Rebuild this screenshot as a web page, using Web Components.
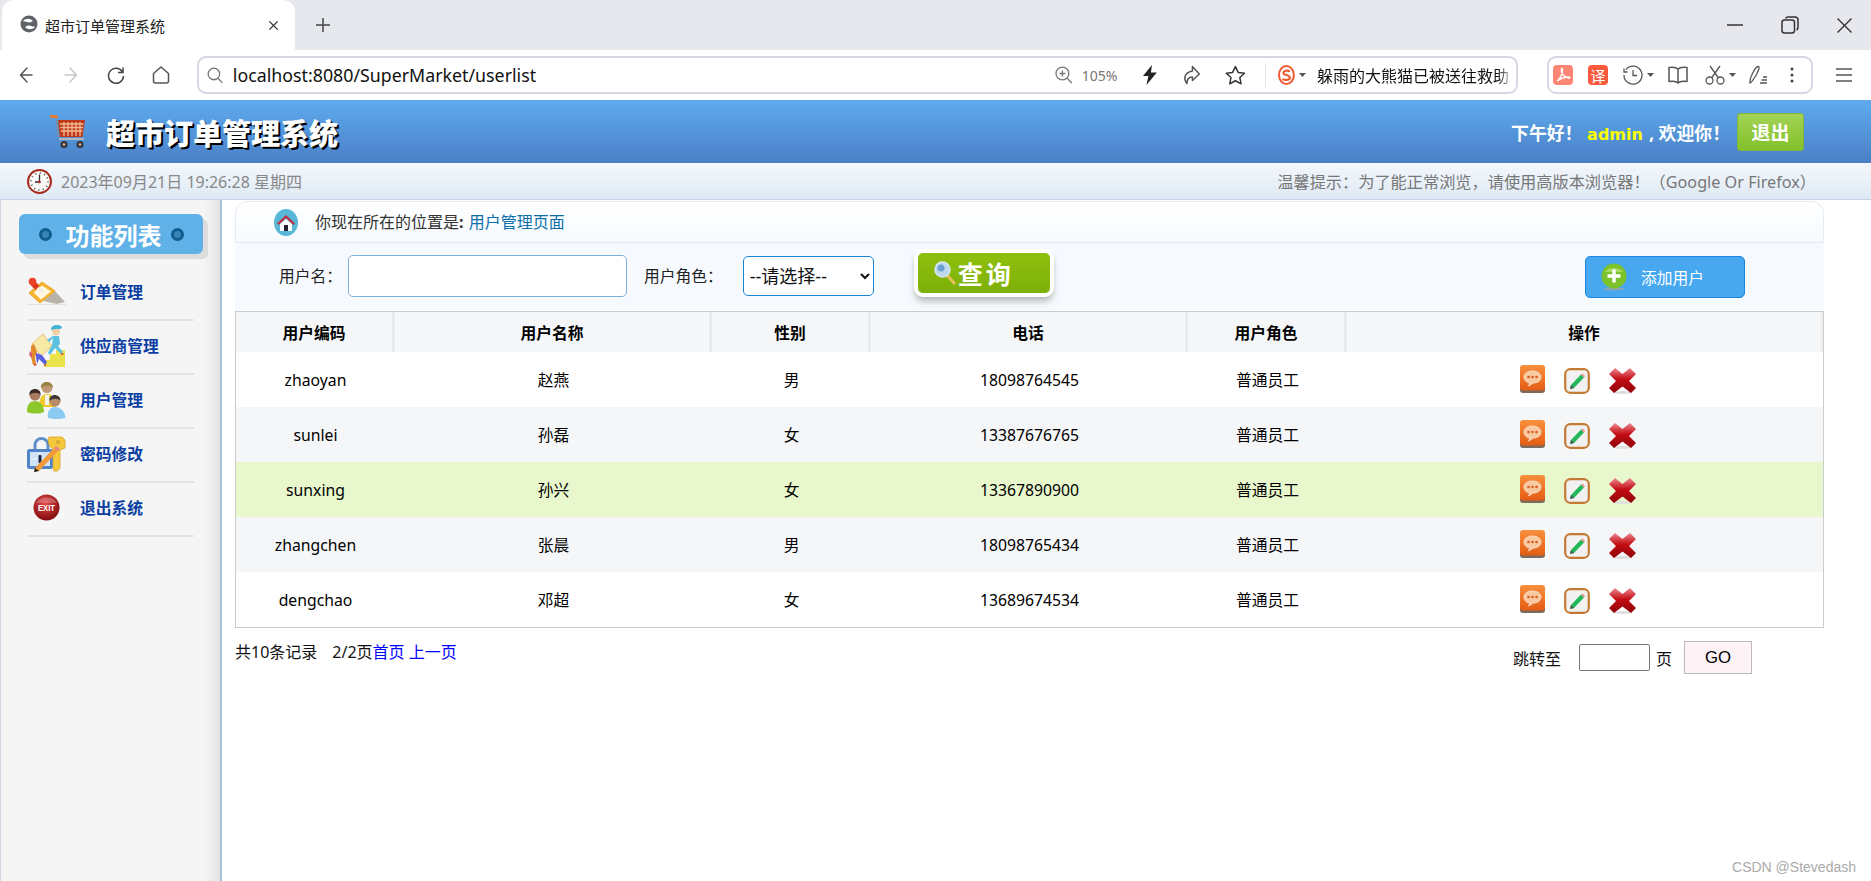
<!DOCTYPE html>
<html lang="zh-CN">
<head>
<meta charset="utf-8">
<title>超市订单管理系统</title>
<style>
  html, body { margin: 0; height: 100%; background: white; overflow: hidden; }
  body { font-family: "Noto Sans", "Noto Sans CJK SC", sans-serif; color: #000; }
</style>
</head>
<body>
<browser-chrome></browser-chrome>
<app-header></app-header>
<time-bar></time-bar>
<app-body>
  <side-menu slot="side"></side-menu>
  <location-bar></location-bar>
  <search-bar></search-bar>
  <user-table>
    <user-row code="zhaoyan" name="赵燕" sex="男" phone="18098764545" role="普通员工"></user-row>
    <user-row code="sunlei" name="孙磊" sex="女" phone="13387676765" role="普通员工" even></user-row>
    <user-row code="sunxing" name="孙兴" sex="女" phone="13367890900" role="普通员工" active></user-row>
    <user-row code="zhangchen" name="张晨" sex="男" phone="18098765434" role="普通员工" even></user-row>
    <user-row code="dengchao" name="邓超" sex="女" phone="13689674534" role="普通员工"></user-row>
  </user-table>
  <page-bar></page-bar>
</app-body>
<water-mark>CSDN @Stevedash</water-mark>

<script>
(function () {
  const line = 'fill="none" stroke="#555" stroke-width="1.5" stroke-linecap="round" stroke-linejoin="round"'
  const caret = `<svg class="c" width="7" height="4" viewBox="0 0 7 4"><path d="M0 0h7L3.5 4z" fill="#555"/></svg>`
  const icons = {
    globe: `<svg width="18" height="18" viewBox="0 0 18 18"><circle cx="9" cy="9" r="8.5" fill="#5f6368"/><path d="M3 6c3-3 7-3 10 0-2 1-3 2-6 1S4 7 3 6zM15 12c-3 3-7 3-10 0 2-1 3-2 6-1s3 0 4 1z" fill="#fff"/></svg>`,
    close: `<svg width="11" height="11" viewBox="0 0 12 12"><path d="M1.5 1.5l9 9M10.5 1.5l-9 9" stroke="#333" stroke-width="1.5"/></svg>`,
    plus: `<svg width="14" height="14" viewBox="0 0 14 14"><path d="M7 0v14M0 7h14" stroke="#444" stroke-width="1.5"/></svg>`,
    back: `<svg width="14" height="16" viewBox="0 0 14 16"><path d="M8 1L1.5 8 8 15M1.5 8H13" ${line}/></svg>`,
    forward: `<svg width="14" height="16" viewBox="0 0 14 16"><path d="M6 1l6.5 7L6 15M12.5 8H1" fill="none" stroke="#c4c6cc" stroke-width="1.5" stroke-linecap="round" stroke-linejoin="round"/></svg>`,
    reload: `<svg width="18" height="18" viewBox="0 0 18 18"><path d="M15.5 6A7.5 7.5 0 1 0 16.5 10M16 1.5V6.5H11" fill="none" stroke="#444" stroke-width="1.5"/></svg>`,
    home: `<svg width="18" height="18" viewBox="0 0 18 18"><path d="M9 1L1.5 7.5V15a2 2 0 0 0 2 2h11a2 2 0 0 0 2-2V7.5z" ${line}/></svg>`,
    search: `<svg width="17" height="17" viewBox="0 0 17 17"><circle cx="7" cy="7" r="5.8" fill="none" stroke="#777" stroke-width="1.3"/><path d="M11.5 11.5l4 4.5" stroke="#777" stroke-width="1.3"/></svg>`,
    zoom: `<svg width="18" height="18" viewBox="0 0 18 18"><circle cx="7.5" cy="7.5" r="6.5" fill="none" stroke="#777" stroke-width="1.3"/><path d="M12.3 12.3l4.7 4.7M7.5 4.5v6M4.5 7.5h6" stroke="#777" stroke-width="1.3"/></svg>`,
    bolt: `<svg width="16" height="20" viewBox="0 0 16 20"><path d="M10 0L1 11h5.5L4.5 20 15 7.5H9z" fill="#222"/></svg>`,
    share: `<svg width="19" height="20" viewBox="0 0 19 20"><path d="M10.5 1.5L17.5 9l-7 6.5V12C7 12 5 14 5 18.5 2 15 1 8 10.5 6z" ${line}/></svg>`,
    star: `<svg width="21" height="20" viewBox="0 0 21 20"><path d="M10.5 1.5l2.8 5.9 6.4.8-4.7 4.4 1.2 6.3-5.7-3.100-5.700 3.100 1.200-6.300L1.300 8.200l6.400-.8z" fill="none" stroke="#333" stroke-width="1.5" stroke-linejoin="round"/></svg>`,
    sogou: `<svg width="17" height="20" viewBox="0 0 17 20"><ellipse cx="8.5" cy="10" rx="7.5" ry="9" fill="#fff" stroke="#ee5a34" stroke-width="2"/><path d="M12 6.5C10 5 5.5 5.5 5.5 8s6.5 1.500 6.500 4.500-5 3-7.500 1.500" fill="none" stroke="#ee5a34" stroke-width="2.2"/></svg>`,
    pdf: `<svg width="20" height="20" viewBox="0 0 20 20"><rect width="20" height="20" rx="4" fill="#ff8674"/><path d="M4 16c3-2 5.5-7 5.5-11 0-2.500-1.200-2.500-1.200 0 0 4 4 8 7.700 8 1 0 1-1-.5-1-3.500 0-8 1.500-11.500 4z" fill="none" stroke="#fff" stroke-width="1.5"/></svg>`,
    history: `<svg width="20" height="20" viewBox="0 0 20 20"><path d="M3 4.5A9 9 0 1 1 1 10M1 3.5V7h3.5M10 5v5.5H14" fill="none" stroke="#555" stroke-width="1.3"/></svg>`,
    book: `<svg width="20" height="18" viewBox="0 0 20 18"><path d="M10 3C8 1 4 1 1 1.5v14c3-.5 7-.5 9 1.500 2-2 6-2 9-1.500v-14C16 1 12 1 10 3zM10 3v14" ${line}/></svg>`,
    scissors: `<svg width="20" height="20" viewBox="0 0 20 20"><circle cx="4.5" cy="15.5" r="3.5" fill="none" stroke="#555" stroke-width="1.3"/><circle cx="15.5" cy="15.5" r="3.5" fill="none" stroke="#555" stroke-width="1.3"/><path d="M6.5 13L15 1M13.5 13L5 1" stroke="#555" stroke-width="1.3"/></svg>`,
    pen: `<svg width="20" height="20" viewBox="0 0 20 20"><path d="M2 18C1 14 7 2 10 1.5c2 0 1 3-1 7-2 3.5-5 9-7 9.5zM12 18h7M13.5 15H19M15 12h4" fill="none" stroke="#555" stroke-width="1.3"/></svg>`,
    dots: `<svg width="4" height="16" viewBox="0 0 4 16"><circle cx="2" cy="2" r="1.5" fill="#444"/><circle cx="2" cy="8" r="1.5" fill="#444"/><circle cx="2" cy="14" r="1.5" fill="#444"/></svg>`,
    menu: `<svg width="16" height="14" viewBox="0 0 16 14"><path d="M0 1h16M0 7h16M0 13h16" stroke="#555" stroke-width="1.3"/></svg>`,
    min: `<svg width="16" height="2" viewBox="0 0 16 2"><path d="M0 1h16" stroke="#333" stroke-width="1.5"/></svg>`,
    restore: `<svg width="18" height="18" viewBox="0 0 18 18"><rect x="1" y="4" width="12.5" height="13" rx="2.5" fill="none" stroke="#333" stroke-width="1.5"/><path d="M4.5 2.5C5 1.500 5.500 1 7 1h7c2 0 3 1 3 3v7.500c0 1.500-.5 2-1.500 2.500" fill="none" stroke="#333" stroke-width="1.5"/></svg>`,
    winclose: `<svg width="15" height="15" viewBox="0 0 15 15"><path d="M.5.5l14 14M14.5.5l-14 14" stroke="#333" stroke-width="1.4"/></svg>`,
    cart: `<svg width="36" height="34" viewBox="0 0 36 34"><path d="M1 2h5l2.5 20" fill="none" stroke="#7f8a96" stroke-width="1.5"/><path d="M.5 1.5h6" stroke="#e07a3a" stroke-width="3" stroke-linecap="round"/><path d="M8 5h27l-2.5 17H10z" fill="#c0391b"/><path d="M10 9h23.5M10.5 12.5h22.5M11 16h21.5M14 7v14M18 7v14M22 7v14M26 7v14M30 7v14" stroke="#f3b892" stroke-width="1.3"/><path d="M9 24h25" stroke="#aeb6be" stroke-width="2"/><circle cx="14" cy="29.5" r="3.5" fill="#3d3532"/><circle cx="14" cy="29.5" r="1.2" fill="#c9c4be"/><circle cx="30" cy="29.5" r="3.5" fill="#3d3532"/><circle cx="30" cy="29.5" r="1.2" fill="#c9c4be"/></svg>`,
    clock: `<svg width="25" height="25" viewBox="0 0 25 25"><circle cx="12.5" cy="12.5" r="11.5" fill="#fbfaf8" stroke="#a62a1c" stroke-width="2"/><circle cx="12.5" cy="12.5" r="8.5" fill="none" stroke="#555" stroke-width="2" stroke-dasharray="1 3.45"/><path d="M12.5 5.5v7.5H8" fill="none" stroke="#333" stroke-width="1.3"/><circle cx="12.5" cy="13" r="1.3" fill="#b22"/></svg>`,
    order: `<svg width="39" height="30" viewBox="0 0 39 30"><path d="M0 27.5h39" stroke="#e0e0e0"/><path d="M16 24l12-10 10 11-8 2z" fill="#b9b3aa"/><path d="M2 16L15 5l13 9-15 12z" fill="#f5b62e" stroke="#eda41e"/><path d="M6.5 15.5L15 8.5l9 6-10 8z" fill="#fff8e0"/><path d="M6 10l3-3 8 7-1.5 2.5z" fill="#f4f0e8"/><path d="M3.5 8l4-4.5 5 5.5-4 4z" fill="#dd3a1e"/><circle cx="5.5" cy="4.5" r="3.8" fill="#e8432a"/></svg>`,
    supplier: `<svg width="39" height="42" viewBox="0 0 39 42"><path d="M17 42v-7h6v-6h6v-4h9v17z" fill="#e9e24a"/><path d="M5 19L16 9l9 12-11 10z" fill="#f6eaa6" stroke="#eec079"/><path d="M4 21l3-2 3 8-2 5 1 8H6l-2-8-2-2 2-4z" fill="#e08a2c"/><path d="M2 26l3 3-1 4z" fill="#d640a8"/><path d="M9 28l6 2 5 7-2 3-6-6-2 5-1-7z" fill="#5a5ee0"/><path d="M8 38l-1 3 3-1zM19 39l-3 1 3 1z" fill="#c9402c"/><circle cx="29" cy="6.5" r="4" fill="#f5cfa5"/><path d="M24 5c0-4 3-5 6-5s5 1 5 3l-2 1h-5z" fill="#3fb6d8"/><path d="M26 11h6l1 8-2 2 5 6-2 2-6-6-5 7-2-2 4-8 1-7-4 4-2-2z" fill="#5cc2e2"/><path d="M34 28l4 1-4 1z" fill="#c9402c"/></svg>`,
    users: `<svg width="39" height="38" viewBox="0 0 39 38"><path d="M12 26c0-9 3-13 8-13s9 4 9 13z" fill="#f0c92e"/><path d="M18 14h4v10h-4z" fill="#f4f4f0"/><circle cx="20" cy="6.5" r="5.5" fill="#c09a78"/><path d="M14 7c-1-8 12-8 12 0-2-3-9-3-12 0z" fill="#9a8444"/><path d="M0 31c-.5-7 3-11 8-11s9 4 9 11c-5 2-12 2-17 0z" fill="#8cc82c"/><circle cx="8" cy="14" r="5.5" fill="#a87a5e"/><path d="M2.5 14c-1-8 12-8 11 0-2-3-8-3-11 0z" fill="#3a2a22"/><path d="M21 37c-1-7 2-11 7-11s10 4 10.5 11c-6 1.500-12 1.500-17.500 0z" fill="#8ccaf2"/><circle cx="28" cy="20" r="5.5" fill="#b88a68"/><path d="M22.5 20c-1-8 11-8 11 0-2-3-8-3-11 0z" fill="#3c3a3a"/></svg>`,
    lock: `<svg width="39" height="36" viewBox="0 0 39 36"><path d="M8 14V9a6.5 6.5 0 0 1 13 0v5" fill="none" stroke="#5f8fc8" stroke-width="3"/><rect y="13" width="26" height="20" rx="2.5" fill="#4f84c6"/><rect x="3" y="16" width="20" height="14" fill="#cfe2f6"/><path d="M3 23h20M13 16v14" stroke="#e8f2fb"/><rect x="11.5" y="19" width="3" height="8" rx="1" fill="#1e2a44"/><path d="M22 1h13l3 3v8l-5 2v18l-2.500 3H27l-1-3V13c-4-2-6-8-4-12z" fill="#f5c83e" stroke="#d9a32a" stroke-width=".8"/><circle cx="31" cy="6" r="2" fill="#d7a734"/><path d="M8 32L27 12l4 3L12 35l-5 1z" fill="#f29a38"/><path d="M27 12l4 3 2-2-4-3z" fill="#e87f92"/><path d="M8 32l4 3-5 1z" fill="#222"/></svg>`,
    exit: `<svg width="27" height="27" viewBox="0 0 27 27"><defs><radialGradient id="ex" cx=".45" cy=".35" r=".7"><stop offset="0" stop-color="#e34a4a"/><stop offset="1" stop-color="#7a0808"/></radialGradient></defs><circle cx="13.5" cy="13.5" r="13" fill="url(#ex)"/><path d="M3 9a11 8 0 0 1 21 0z" fill="#fff" opacity=".22"/><text x="13.5" y="17" text-anchor="middle" font-family="Liberation Sans" font-size="9" font-weight="700" fill="#fff" textLength="17" lengthAdjust="spacingAndGlyphs">EXIT</text></svg>`,
    house: `<svg width="24" height="27" viewBox="0 0 24 27"><ellipse cx="12" cy="13.5" rx="12" ry="13.5" fill="#57b7d6"/><path d="M6 15l6-5 6 5v7H6z" fill="#fff"/><path d="M3 14.5L12 6l9 8.5-1.500 1.500L12 9l-7.500 7z" fill="#c22b3c"/><rect x="10" y="16" width="4" height="6" fill="#223"/></svg>`,
    lens: `<svg width="23" height="24" viewBox="0 0 23 24"><path d="M12 13l9 10" stroke="#e8c05a" stroke-width="3"/><circle cx="8.5" cy="8.5" r="7.5" fill="#bcd9ee" stroke="#d8e6f0" stroke-width="1.5"/><circle cx="7" cy="7" r="3.5" fill="#6d9fd0"/></svg>`,
    add: `<svg width="26" height="28" viewBox="0 0 26 28"><ellipse cx="13" cy="26" rx="11" ry="1.5" fill="#8aa5b8"/><circle cx="13" cy="13" r="12.5" fill="#7cc22a"/><path d="M4 9a9.5 6 0 0 1 18 0z" fill="#a7dc60"/><path d="M13 6.5v13M6.5 13h13" stroke="#fff" stroke-width="3.5"/></svg>`,
    view: `<svg width="25" height="28" viewBox="0 0 25 28"><defs><linearGradient id="vi" x1="0" y1="0" x2="0" y2="1"><stop offset="0" stop-color="#f8903c"/><stop offset="1" stop-color="#e35c14"/></linearGradient></defs><rect y="2" width="25" height="26" rx="3" fill="#7d6a5c"/><rect width="25" height="25.5" rx="3" fill="url(#vi)"/><path d="M12.5 6C7.5 6 4 8.5 4 12s3 6 6 6l-1.5 3 5-3c4.5 0 7.5-2.5 7.5-6s-3.5-6-8.5-6z" fill="#f8c8a0" stroke="#fbe3cf" stroke-width=".8"/><circle cx="8.5" cy="12" r="1.3" fill="#d85a1c"/><circle cx="12.5" cy="12" r="1.3" fill="#d85a1c"/><circle cx="16.5" cy="12" r="1.3" fill="#d85a1c"/></svg>`,
    edit: `<svg width="26" height="26" viewBox="0 0 26 26"><rect x="1.2" y="1.2" width="23.6" height="23.6" rx="5" fill="#f1f1f1" stroke="#c47a34" stroke-width="2.2"/><path d="M7 17L17 6.5l3 3L10 20l-4 1z" fill="#22b85a"/><path d="M17 6.5l3 3 1-1.5-2.5-2.5z" fill="#f09090"/><path d="M7 17l-1 4 4-1z" fill="#555"/></svg>`,
    del: `<svg width="27" height="26" viewBox="0 0 27 26"><defs><linearGradient id="de" x1="0" y1="0" x2="0" y2="1"><stop offset="0" stop-color="#ee8890"/><stop offset=".45" stop-color="#c40d14"/><stop offset="1" stop-color="#8e0208"/></linearGradient></defs><ellipse cx="13.5" cy="24.5" rx="9" ry="1.5" fill="#ddd"/><path d="M6 0l7.5 6L21 0l6 6-7 7 7 7-5 5-8.5-6.5L5 25l-5-5 7-7-7-7z" fill="url(#de)"/></svg>`
  }

  class BrowserChrome extends HTMLElement {
    constructor () {
      super()
      this.attachShadow({ mode: 'open' }).innerHTML = `
        <style>
          :host { display: block; height: 100px; background: white; font-family: "Noto Sans", "Noto Sans CJK SC", sans-serif; }
          .strip { display: flex; align-items: center; height: 50px; background: #e6e8ed; }
          .tab { display: flex; align-items: center; box-sizing: border-box; width: 293px; height: 50px; margin-left: 2px; padding: 0 16px 0 18px; background: white; border-radius: 12px 12px 0 0; }
          .tab span { flex: 1; margin-left: 7px; font-size: 15px; color: #222; white-space: nowrap; }
          .tab svg:first-child { margin-top: -2px; }
          .new { display: flex; margin-left: 21px; }
          .win { margin-left: auto; display: flex; align-items: center; gap: 38px; padding-right: 19px; }
          .bar { display: flex; align-items: center; height: 50px; }
          .nav { display: flex; align-items: center; width: 197px; box-sizing: border-box; padding-left: 19px; }
          .nav > :nth-child(1) { margin-right: 31px; }
          .nav > :nth-child(2) { margin-right: 29px; }
          .nav > :nth-child(3) { margin-right: 27px; }
          .url { display: flex; align-items: center; box-sizing: border-box; width: 1321px; height: 38px; padding: 0 3px 0 8px; border: 2px solid #d5d8e3; border-radius: 9px; }
          .url b { margin-left: 9px; font-weight: 400; font-size: 17.8px; color: #111; flex: 0 0 auto; width: 822px; white-space: nowrap; }
          .pct { margin-left: 9px; width: 61px; font-size: 14px; color: #777; white-space: nowrap; }
          .sep { width: 1px; height: 24px; margin: 0 12px 0 19px; background: #e3e3e8; }
          .news { margin-left: 11px; width: 198px; overflow: hidden; white-space: nowrap; font-size: 16px; color: #111; -webkit-mask-image: linear-gradient(to right, black 180px, transparent 198px); }
          .ext { display: flex; align-items: center; box-sizing: border-box; width: 266px; height: 38px; margin-left: 29px; padding-left: 4px; border: 2px solid #d5d8e3; border-radius: 9px; }
          svg.c { margin-left: 4px; }
          .tag { display: flex; align-items: center; justify-content: center; width: 20px; height: 20px; border-radius: 4px; background: #fb5a3c; color: white; font-size: 15px; margin: 0 15px; }
          .menu { margin-left: 23px; display: flex; }
        </style>
        <div class="strip">
          <div class="tab">${icons.globe}<span>超市订单管理系统</span>${icons.close}</div>
          <div class="new">${icons.plus}</div>
          <div class="win">${icons.min}${icons.restore}${icons.winclose}</div>
        </div>
        <div class="bar">
          <div class="nav">${icons.back}${icons.forward}${icons.reload}${icons.home}</div>
          <div class="url">
            ${icons.search}<b>localhost:8080/SuperMarket/userlist</b>
            ${icons.zoom}<span class="pct">105%</span>
            ${icons.bolt}<span style="width:24px"></span>${icons.share}<span style="width:25px"></span>${icons.star}
            <span class="sep"></span>${icons.sogou}${caret}
            <span class="news">躲雨的大熊猫已被送往救助</span>
          </div>
          <div class="ext">
            ${icons.pdf}<span class="tag">译</span>${icons.history}${caret}
            <span style="width:14px"></span>${icons.book}<span style="width:17px"></span>${icons.scissors}${caret}
            <span style="width:12px"></span>${icons.pen}<span style="width:22px"></span>${icons.dots}
          </div>
          <div class="menu">${icons.menu}</div>
        </div>
      `
    }
  }

  class AppHeader extends HTMLElement {
    constructor () {
      super()
      this.attachShadow({ mode: 'open' }).innerHTML = `
        <style>
          :host { display: flex; align-items: center; box-sizing: border-box; height: 63px; padding: 0 67px 0 50px; background: linear-gradient(#5fabee, #4a7fc6); font-family: "Noto Sans", "Noto Sans CJK SC", sans-serif; }
          h1 { margin: 0 0 0 20px; font-size: 29px; font-weight: 900; color: white; text-shadow: 2px 2px 0 #000; white-space: nowrap; }
          .hello { margin-left: auto; color: white; font-size: 17.85px; font-weight: 700; white-space: nowrap; }
          em { font: 700 16px "DejaVu Sans", sans-serif; color: #ff0; margin: 0 6px 0 0; }
          button { margin-left: 7px; width: 67px; height: 38px; padding: 0; border: 1px solid #7fb53c; border-radius: 3px; background: linear-gradient(#a3d356, #83c12a); color: white; font: 700 19px "Noto Sans CJK SC", sans-serif; }
        </style>
        ${icons.cart}
        <h1>超市订单管理系统</h1>
        <div class="hello">下午好！ <em>admin</em>, 欢迎你！</div>
        <button>退出</button>
      `
    }
  }

  class TimeBar extends HTMLElement {
    constructor () {
      super()
      this.attachShadow({ mode: 'open' }).innerHTML = `
        <style>
          :host { display: flex; align-items: center; box-sizing: border-box; height: 37px; padding: 0 55px 0 27px; background: linear-gradient(#f4f7fc, #deeaf4); border-bottom: 1px solid #c3d3e3; font-family: "Noto Sans", "Noto Sans CJK SC", sans-serif; font-size: 16px; color: #888; white-space: nowrap; }
          .now { margin-left: 9px; }
          .tip { margin-left: auto; color: #777; font-size: 16.2px; }
        </style>
        ${icons.clock}
        <span class="now">2023年09月21日 19:26:28 星期四</span>
        <span class="tip">温馨提示：为了能正常浏览，请使用高版本浏览器！（Google Or Firefox）</span>
      `
    }
  }

  class AppBody extends HTMLElement {
    constructor () {
      super()
      this.attachShadow({ mode: 'open' }).innerHTML = `
        <style>
          :host { display: grid; grid-template-columns: 222px 1589px; column-gap: 13px; height: 681px; }
          .main { padding-top: 1px; min-width: 0; }
        </style>
        <slot name="side"></slot>
        <div class="main"><slot></slot></div>
      `
    }
  }

  class SideMenu extends HTMLElement {
    constructor () {
      super()
      let items = [
        ['order', '订单管理'], ['supplier', '供应商管理'], ['users', '用户管理'], ['lock', '密码修改'], ['exit', '退出系统']
      ]
      this.attachShadow({ mode: 'open' }).innerHTML = `
        <style>
          :host { display: block; box-sizing: border-box; height: 100%; padding: 14px 26px 0 1px; background: linear-gradient(to right, #f5f5f5 203px, #e2e2e2 220px); border-left: 1px solid #ced8e3; border-right: 2px solid #a8c1dc; font-family: "Noto Sans", "Noto Sans CJK SC", sans-serif; }
          .title { display: flex; align-items: center; justify-content: center; box-sizing: border-box; width: 184px; height: 40px; margin-left: 17px; background: #5fb1e8; border-radius: 6px; box-shadow: 5px 5px 0 #ddd; color: white; font-size: 24px; font-weight: 700; }
          .title span:nth-child(2) { margin: 0 9px 0 14px; }
          .dot { width: 13px; height: 13px; border-radius: 50%; background: #3a84b8; box-sizing: border-box; border: 3px solid #0f5c8e; }
          .list { margin: 13px 0 0 25px; }
          a { display: flex; align-items: center; box-sizing: border-box; height: 54px; padding-bottom: 3px; border-bottom: 2px solid #e4e4e4; color: #0a3ea3; font-size: 15.75px; font-weight: 700; text-decoration: none; }
          .ic { display: flex; justify-content: center; width: 39px; margin-right: 14px; }
        </style>
        <div class="title"><span class="dot"></span><span>功能列表</span><span class="dot"></span></div>
        <div class="list">
          ${items.map(it => `<a href="#"><span class="ic">${icons[it[0]]}</span>${it[1]}</a>`).join('')}
        </div>
      `
    }
  }

  class LocationBar extends HTMLElement {
    constructor () {
      super()
      this.attachShadow({ mode: 'open' }).innerHTML = `
        <style>
          :host { display: flex; align-items: center; box-sizing: border-box; height: 42px; padding-left: 38px; border: 1px solid #e4eaf5; border-radius: 12px 12px 0 0; background: linear-gradient(#fff, #f6fafe); font-size: 16px; color: #333; white-space: nowrap; }
          span { margin-left: 17px; margin-top: -2px; }
          a { color: #0b6fa8; text-decoration: none; margin-left: 1px; }
          b { font-weight: 700; }
        </style>
        ${icons.house}
        <span>你现在所在的位置是<b>:</b> <a href="#">用户管理页面</a></span>
      `
    }
  }

  class SearchBar extends HTMLElement {
    constructor () {
      super()
      this.attachShadow({ mode: 'open' }).innerHTML = `
        <style>
          :host { display: flex; align-items: center; box-sizing: border-box; height: 68px; padding: 0 79px 2px 44px; background: #f6fafe; font-size: 15.75px; color: #222; white-space: nowrap; font-family: "Noto Sans", "Noto Sans CJK SC", sans-serif; }
          label { margin-top: -2px; }
          input { box-sizing: border-box; width: 279px; height: 42px; margin: 0 17px 0 6px; border: 1px solid #7eb0dc; border-radius: 5px; background: white; outline: none; }
          select { box-sizing: border-box; width: 131px; height: 40px; margin-left: 20px; padding: 0 0 0 2px; border: 1px solid #1a86d8; border-radius: 5px; background: white; font: 18px "Noto Sans", "Noto Sans CJK SC", sans-serif; color: #111; }
          .query { display: flex; align-items: center; box-sizing: border-box; width: 132px; height: 40px; margin-left: 44px; margin-top: -6px; padding-left: 16px; border-radius: 5px; background: linear-gradient(#8fc00f, #7db008); box-shadow: 0 0 0 4px white, 0 5px 7px 3px rgba(0,0,0,.28); color: white; font-size: 25px; font-weight: 700; letter-spacing: 3px; }
          .query svg { margin-right: 1px; }
          .add { display: flex; align-items: center; box-sizing: border-box; width: 160px; height: 42px; margin-left: auto; margin-top: 2px; padding-left: 15px; border: 1px solid #1b87e0; border-radius: 5px; background: #47a8f0; color: white; font-size: 15.75px; }
          .add svg { margin-right: 14px; }
        </style>
        <label>用户名：</label>
        <input type="text">
        <label>用户角色：</label>
        <select><option>--请选择--</option></select>
        <div class="query">${icons.lens}查询</div>
        <div class="add">${icons.add}添加用户</div>
      `
    }
  }

  const columns = '159fr 317fr 159fr 317fr 159fr 476fr'

  class UserTable extends HTMLElement {
    constructor () {
      super()
      this.attachShadow({ mode: 'open' }).innerHTML = `
        <style>
          :host { display: block; box-sizing: border-box; border: 1px solid #ccc; font-size: 15.75px; font-family: "Noto Sans", "Noto Sans CJK SC", sans-serif; }
          .head { display: grid; grid-template-columns: ${columns}; height: 40px; background: #f5f6f8; font-weight: 700; }
          .head div { display: flex; align-items: center; justify-content: center; border-right: 3px solid #e8eaec; }
          .head div:last-child { border-right: 2px solid #e8eaec; }
          ::slotted(user-row) { grid-template-columns: ${columns}; }
        </style>
        <div class="head">
          <div>用户编码</div><div>用户名称</div><div>性别</div><div>电话</div><div>用户角色</div><div>操作</div>
        </div>
        <slot></slot>
      `
    }
  }

  class UserRow extends HTMLElement {
    constructor () {
      super()
      this.attachShadow({ mode: 'open' })
    }
    connectedCallback () {
      let get = name => this.getAttribute(name)
      this.shadowRoot.innerHTML = `
        <style>
          :host { display: grid; height: 55px; background: white; }
          :host([even]) { background: #f5f6f8; }
          :host([active]) { background: #e8f7cc; }
          div { display: flex; align-items: center; justify-content: center; }
          .ops { gap: 19px; padding-right: 14px; }
          .ops svg { display: block; }
          .ops span { margin-top: 2px; }
          .ops span:first-child { margin-top: -2px; }
        </style>
        <div>${get('code')}</div><div>${get('name')}</div><div>${get('sex')}</div><div>${get('phone')}</div><div>${get('role')}</div>
        <div class="ops"><span>${icons.view}</span><span>${icons.edit}</span><span>${icons.del}</span></div>
      `
    }
  }

  class PageBar extends HTMLElement {
    constructor () {
      super()
      this.attachShadow({ mode: 'open' }).innerHTML = `
        <style>
          :host { display: flex; align-items: flex-start; font-size: 16px; color: #111; white-space: nowrap; font-family: "Noto Sans", "Noto Sans CJK SC", sans-serif; }
          .info { margin-top: 11px; }
          .info b { font-weight: 400; margin-left: 15px; }
          a { color: #00f; text-decoration: none; }
          .jump { display: flex; align-items: center; margin: 13px 72px 0 auto; }
          input { box-sizing: border-box; width: 71px; height: 27px; margin: 0 6px 0 18px; border: 1px solid #767676; border-radius: 2px; background: white; }
          button { box-sizing: border-box; width: 68px; height: 33px; margin-left: 12px; padding: 0; border: 1px solid #bbb; background: #fdf2f6; font: 16.8px "Liberation Sans", sans-serif; color: #000; }
        </style>
        <div class="info">共10条记录<b>2/2页</b><a href="#">首页</a> <a href="#">上一页</a></div>
        <div class="jump"><span>跳转至</span><input type="text"><span>页</span><button>GO</button></div>
      `
    }
  }

  class WaterMark extends HTMLElement {
    constructor () {
      super()
      this.attachShadow({ mode: 'open' }).innerHTML = `
        <style>
          :host { position: absolute; right: 15px; bottom: 6px; font: 14px "Liberation Sans", sans-serif; color: #aaa; }
        </style>
        <slot></slot>
      `
    }
  }

  window.customElements.define('browser-chrome', BrowserChrome)
  window.customElements.define('app-header', AppHeader)
  window.customElements.define('time-bar', TimeBar)
  window.customElements.define('app-body', AppBody)
  window.customElements.define('side-menu', SideMenu)
  window.customElements.define('location-bar', LocationBar)
  window.customElements.define('search-bar', SearchBar)
  window.customElements.define('user-table', UserTable)
  window.customElements.define('user-row', UserRow)
  window.customElements.define('page-bar', PageBar)
  window.customElements.define('water-mark', WaterMark)
})()
</script>
</body>
</html>
